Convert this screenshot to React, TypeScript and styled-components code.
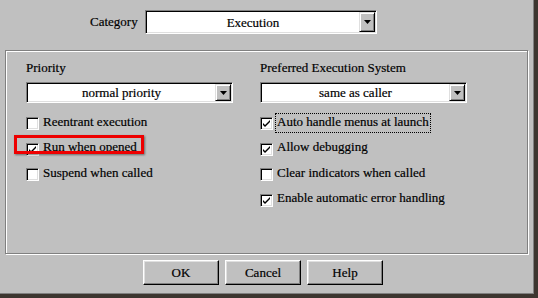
import { FunctionComponent, ReactNode } from 'react';
import styled, { createGlobalStyle } from 'styled-components';

const GlobalStyle = createGlobalStyle`
  body {
    margin: 0;
    background: #c0c0c0;
  }
`;

const Window = styled.div`
  box-sizing: border-box;
  width: 538px;
  height: 298px;
  background: #c0c0c0;
  border-right: 4px solid #3d3630;
  border-bottom: 4px solid #3d3630;
  box-shadow: inset -1px -1px 0 #808080;
  display: flex;
  flex-direction: column;
  font-family: "Liberation Serif", "DejaVu Serif", serif;
  font-size: 13px;
  color: #000;
  -webkit-text-stroke: 0.2px #000;
`;

const CategoryRow = styled.div`
  display: flex;
  align-items: center;
  padding: 10px 0 0 90px;
`;

const CategoryLabel = styled.span`
  width: 55px;
`;

const Combo = styled.div<{ $width: number; $height: number }>`
  box-sizing: border-box;
  width: ${(p) => p.$width}px;
  height: ${(p) => p.$height}px;
  display: flex;
  align-items: stretch;
  background: #fff;
  border-top: 1px solid #808080;
  border-left: 1px solid #808080;
  border-right: 1px solid #fff;
  border-bottom: 1px solid #fff;
  box-shadow: inset 1px 1px 0 #000, inset -1px -1px 0 #dfdfdf;
  padding: 1px;
`;

const ComboText = styled.div`
  flex: 1;
  display: flex;
  align-items: center;
  justify-content: center;
  line-height: 1;
`;

const ArrowButton = styled.div`
  box-sizing: border-box;
  width: 16px;
  display: flex;
  align-items: center;
  justify-content: center;
  background: #c0c0c0;
  border-top: 1px solid #dfdfdf;
  border-left: 1px solid #dfdfdf;
  border-right: 1px solid #000;
  border-bottom: 1px solid #000;
  box-shadow: inset 1px 1px 0 #fff, inset -1px -1px 0 #808080;
`;

const Panel = styled.div`
  box-sizing: border-box;
  margin: 16px 0 0 5px;
  width: 523px;
  height: 204px;
  border: 1px solid #808080;
  box-shadow: inset 1px 1px 0 #fff, 1px 1px 0 #fff;
  padding: 9px 0 0 20px;
  display: grid;
  grid-template-columns: 207px 207px;
  column-gap: 27px;
  align-content: start;
`;

const Column = styled.div`
  display: flex;
  flex-direction: column;
`;

const GroupLabel = styled.div`
  line-height: 16px;
  margin-bottom: 6px;
`;

const CheckList = styled.div`
  margin-top: 7px;
  display: flex;
  flex-direction: column;
`;

const CheckRow = styled.div`
  position: relative;
  height: 25.5px;
  display: flex;
  align-items: center;
  gap: 2px;
`;

const Box = styled.div`
  box-sizing: border-box;
  width: 13px;
  height: 13px;
  background: #fff;
  border-top: 1px solid #808080;
  border-left: 1px solid #808080;
  border-right: 1px solid #fff;
  border-bottom: 1px solid #fff;
  box-shadow: inset 1px 1px 0 #000, inset -1px -1px 0 #dfdfdf;
  display: flex;
  align-items: center;
  justify-content: center;
  margin-top: 2px;
`;

const CheckText = styled.span<{ $focused?: boolean }>`
  line-height: 16px;
  padding: 0 1px 2px;
  border: 1px dotted ${(p) => (p.$focused ? '#000' : 'transparent')};
`;

const Highlight = styled.div`
  position: absolute;
  left: -12px;
  top: -1px;
  width: 124px;
  height: 13px;
  border: 3px solid #ee0000;
  box-shadow: 1px 1px 2px rgba(0, 0, 0, 0.45);
  pointer-events: none;
`;

const ButtonRow = styled.div`
  display: flex;
  gap: 6px;
  margin: 6px 0 0 143px;
`;

const Button = styled.div`
  box-sizing: border-box;
  width: 76px;
  height: 25px;
  display: flex;
  align-items: center;
  justify-content: center;
  background: #c0c0c0;
  border-top: 1px solid #fff;
  border-left: 1px solid #fff;
  border-right: 1px solid #000;
  border-bottom: 1px solid #000;
  box-shadow: inset -1px -1px 0 #808080, inset 1px 1px 0 #dfdfdf;
`;

const Arrow = () => (
  <svg width="7" height="4" viewBox="0 0 7 4">
    <path d="M0 0h7L3.5 4z" fill="#000" />
  </svg>
);

const Tick = () => (
  <svg width="9" height="9" viewBox="0 0 9 9">
    <path d="M1 4l2 2 5-5v2l-5 5-2-2z" fill="#000" />
  </svg>
);

interface DropdownProps {
  value: string;
  width: number;
  height: number;
}

const Dropdown: FunctionComponent<DropdownProps> = ({ value, width, height }) => (
  <Combo $width={width} $height={height}>
    <ComboText>{value}</ComboText>
    <ArrowButton>
      <Arrow />
    </ArrowButton>
  </Combo>
);

interface CheckProps {
  label: string;
  checked?: boolean;
  focused?: boolean;
  children?: ReactNode;
}

const Check: FunctionComponent<CheckProps> = ({ label, checked, focused, children }) => (
  <CheckRow>
    <Box>{checked && <Tick />}</Box>
    <CheckText $focused={focused}>{label}</CheckText>
    {children}
  </CheckRow>
);

export default function App() {
  return (
    <Window>
      <GlobalStyle />
      <CategoryRow>
        <CategoryLabel>Category</CategoryLabel>
        <Dropdown value="Execution" width={232} height={24} />
      </CategoryRow>
      <Panel>
        <Column>
          <GroupLabel>Priority</GroupLabel>
          <Dropdown value="normal priority" width={207} height={21} />
          <CheckList>
            <Check label="Reentrant execution" />
            <Check label="Run when opened" checked>
              <Highlight />
            </Check>
            <Check label="Suspend when called" />
          </CheckList>
        </Column>
        <Column>
          <GroupLabel>Preferred Execution System</GroupLabel>
          <Dropdown value="same as caller" width={207} height={21} />
          <CheckList>
            <Check label="Auto handle menus at launch" checked focused />
            <Check label="Allow debugging" checked />
            <Check label="Clear indicators when called" />
            <Check label="Enable automatic error handling" checked />
          </CheckList>
        </Column>
      </Panel>
      <ButtonRow>
        <Button>OK</Button>
        <Button>Cancel</Button>
        <Button>Help</Button>
      </ButtonRow>
    </Window>
  );
}
